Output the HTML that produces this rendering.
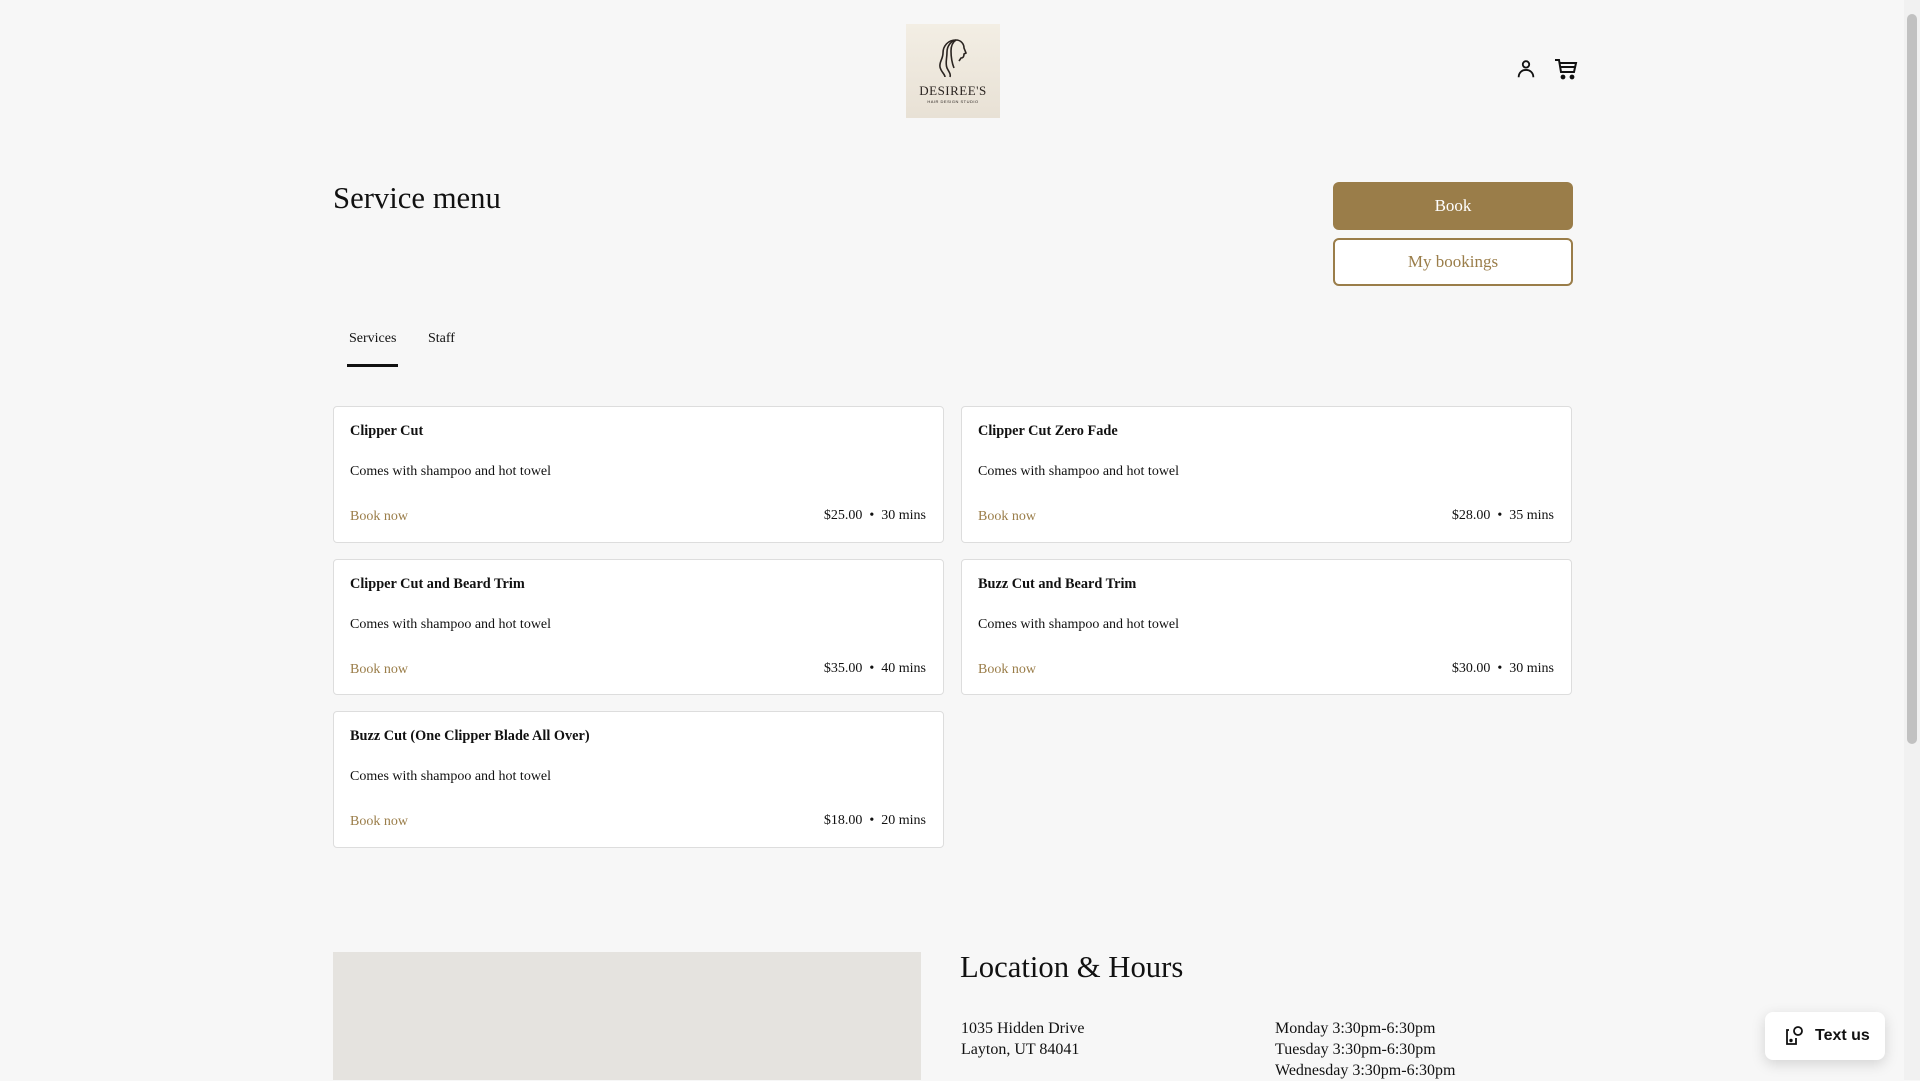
<!DOCTYPE html>
<html><head><meta charset="utf-8"><style>
*{box-sizing:border-box;margin:0;padding:0}
html,body{width:1920px;height:1080px;overflow:hidden;background:#f7f7f7;font-family:"Liberation Serif",serif;color:#111}
.abs{position:absolute}
.logo{left:906px;top:24px;width:94px;height:94px;background:linear-gradient(#f3eee4,#e8e1d5);text-align:center}
.card{position:absolute;width:611px;background:#fff;border:1px solid #ddd;border-radius:4px}
.card .t{position:absolute;left:16px;top:16px;font-weight:bold;font-size:14.3px}
.card .d{position:absolute;left:16px;top:57px;font-size:14px}
.card .b{position:absolute;left:16px;top:102px;font-size:14px;color:#9a7d49}
.card .p{position:absolute;right:17px;top:101px;font-size:14px}
.sb{position:absolute;left:1904px;top:0;width:16px;height:1080px;background:#f1f1f1}
</style></head><body>
<div class="abs logo">
<svg width="50" height="50" viewBox="0 0 50 50" style="margin-top:8px"><g fill="none" stroke="#2a2420" stroke-width="1.6"><path d="M28 8c-8 0-13 6-13 13 0 6-4 9-3 14 1 5 5 7 5 10"/><path d="M28 8c-5 1-9 6-9 12 0 7-2 11 0 16 2 4 4 6 3 9"/><path d="M28 8c-3 2-5 6-5 11 0 7 1 12 3 17"/><path d="M28 8c5 0 8 4 8 8l2 5-2 1c0 3-1 4-3 4l-2 3"/></g></svg>
<div style="font-size:13px;letter-spacing:.5px;color:#2a2420;margin-top:-4px">DESIREE'S</div>
<div style="font-family:'Liberation Sans',sans-serif;font-size:4px;color:#2a2420;letter-spacing:.5px">HAIR DESIGN STUDIO</div>
</div>
<svg class="abs" style="left:1515px;top:58px" width="22" height="22" viewBox="0 0 24 24" fill="none" stroke="#111" stroke-width="2"><circle cx="12" cy="7" r="3.5"/><path d="M4 21c0-5 3.5-8 8-8s8 3 8 8"/></svg>
<svg class="abs" style="left:1554px;top:58px" width="24" height="22" viewBox="0 0 24 22" fill="none" stroke="#111" stroke-width="2"><path d="M1 2h4l2 12h13l2-9H6"/><path d="M7 9h14"/><circle cx="9" cy="19" r="1.4" fill="#111"/><circle cx="18" cy="19" r="1.4" fill="#111"/></svg>

<div class="abs" style="left:333px;top:181px;font-size:30.7px">Service menu</div>
<div class="abs" style="left:1333px;top:182px;width:240px;height:48px;background:#9a7d49;border-radius:6px;color:#fff;font-size:17px;text-align:center;line-height:48px">Book</div>
<div class="abs" style="left:1333px;top:238px;width:240px;height:48px;border:2px solid #9a7d49;border-radius:6px;color:#9a7d49;font-size:17px;text-align:center;line-height:44px;background:#fff">My bookings</div>

<div class="abs" style="left:349px;top:331px;font-size:14px">Services</div>
<div class="abs" style="left:428px;top:331px;font-size:14px">Staff</div>
<div class="abs" style="left:347px;top:364px;width:51px;height:3px;background:#111"></div>

<div class="card" style="left:333px;top:406px;height:137px"><div class="t">Clipper Cut</div><div class="d">Comes with shampoo and hot towel</div><div class="b">Book now</div><div class="p">$25.00 &nbsp;•&nbsp; 30 mins</div></div>
<div class="card" style="left:961px;top:406px;height:137px"><div class="t">Clipper Cut Zero Fade</div><div class="d">Comes with shampoo and hot towel</div><div class="b">Book now</div><div class="p">$28.00 &nbsp;•&nbsp; 35 mins</div></div>
<div class="card" style="left:333px;top:559px;height:136px"><div class="t">Clipper Cut and Beard Trim</div><div class="d">Comes with shampoo and hot towel</div><div class="b">Book now</div><div class="p">$35.00 &nbsp;•&nbsp; 40 mins</div></div>
<div class="card" style="left:961px;top:559px;height:136px"><div class="t">Buzz Cut and Beard Trim</div><div class="d">Comes with shampoo and hot towel</div><div class="b">Book now</div><div class="p">$30.00 &nbsp;•&nbsp; 30 mins</div></div>
<div class="card" style="left:333px;top:711px;height:137px"><div class="t">Buzz Cut (One Clipper Blade All Over)</div><div class="d">Comes with shampoo and hot towel</div><div class="b">Book now</div><div class="p">$18.00 &nbsp;•&nbsp; 20 mins</div></div>

<div class="abs" style="left:333px;top:952px;width:588px;height:128px;background:#e5e3df"></div>
<div class="abs" style="left:960px;top:950px;font-size:30.7px">Location &amp; Hours</div>
<div class="abs" style="left:961px;top:1018px;font-size:16px;line-height:21px">1035 Hidden Drive<br>Layton, UT 84041</div>
<div class="abs" style="left:1275px;top:1018px;font-size:16px;line-height:21px">Monday 3:30pm-6:30pm<br>Tuesday 3:30pm-6:30pm<br>Wednesday 3:30pm-6:30pm</div>

<div class="abs" style="left:1765px;top:1012px;width:120px;height:48px;background:#fff;border-radius:8px;box-shadow:0 4px 14px rgba(0,0,0,.15);font-family:'Liberation Sans',sans-serif;font-weight:bold;font-size:16px;line-height:48px;padding-left:50px;color:#111">Text us
<svg style="position:absolute;left:18px;top:13px" width="22" height="22" viewBox="0 0 22 22" fill="none" stroke="#111" stroke-width="1.8"><path d="M6 5H4v14h9v-6"/><circle cx="15" cy="6" r="4"/><circle cx="8" cy="15.5" r=".8" fill="#111"/></svg></div>

<div class="sb"><div style="position:absolute;left:3px;top:14px;width:10px;height:730px;background:#c1c1c1;border-radius:5px"></div></div>
</body></html>
